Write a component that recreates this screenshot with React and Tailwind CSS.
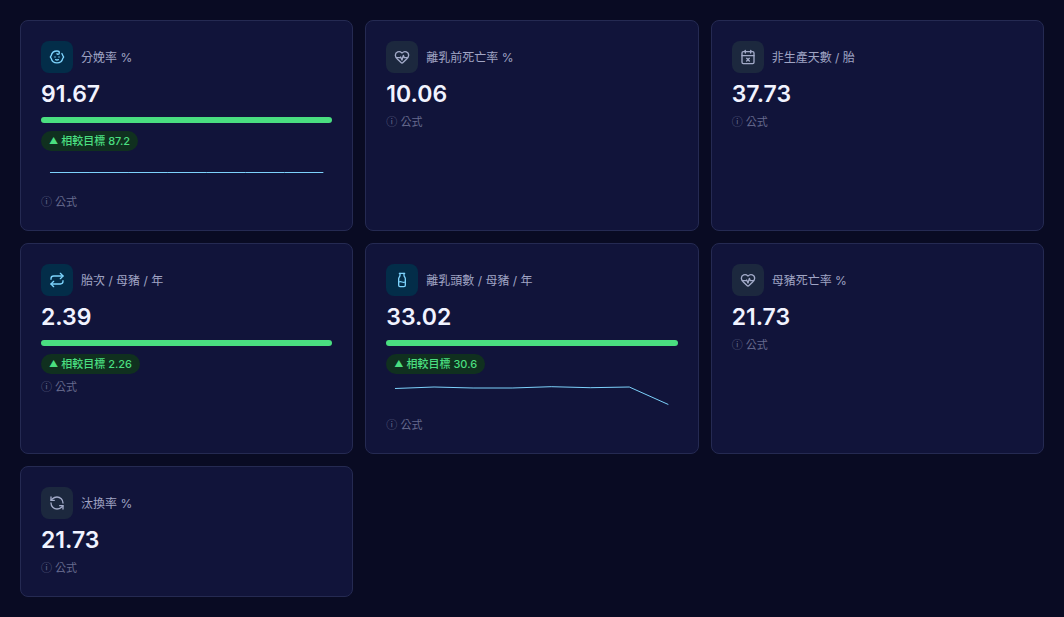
import { Baby, CalendarX, HeartPulse, Milk, RefreshCcw, Repeat } from 'lucide-react'
import clsx from 'clsx'

const metrics = [
  {
    id: 'farrowing-rate',
    label: '分娩率 %',
    value: '91.67',
    icon: Baby,
    target: '87.2',
    trend: [15.5, 15.5, 15.5, 15.5, 15.5, 15.5, 15.5, 15.5],
  },
  { id: 'preweaning-mortality', label: '離乳前死亡率 %', value: '10.06', icon: HeartPulse },
  { id: 'non-productive-days', label: '非生產天數 / 胎', value: '37.73', icon: CalendarX },
  { id: 'litters', label: '胎次 / 母豬 / 年', value: '2.39', icon: Repeat, target: '2.26' },
  {
    id: 'weaned',
    label: '離乳頭數 / 母豬 / 年',
    value: '33.02',
    icon: Milk,
    target: '30.6',
    trend: [8.5, 7, 8, 8, 6.7, 7.7, 7, 24.5],
  },
  { id: 'sow-mortality', label: '母豬死亡率 %', value: '21.73', icon: HeartPulse },
  { id: 'culling-rate', label: '汰換率 %', value: '21.73', icon: RefreshCcw },
]

const Sparkline = ({ data }) => {
  const step = 274 / (data.length - 1)
  const points = data.map((y, i) => `${9 + i * step},${y}`).join(' ')

  return (
    <svg
      className="block w-full h-8"
      viewBox="0 0 292 32"
      preserveAspectRatio="none"
      aria-hidden="true"
    >
      <polyline points={points} fill="none" stroke="#7dd3fc" strokeWidth="1" />
    </svg>
  )
}

const MetricCard = ({ metric }) => {
  const { id, label, value, icon: Icon, target, trend } = metric

  return (
    <section
      aria-labelledby={id}
      className="flex flex-col items-start rounded-lg border border-[#252a52] bg-[#11143a] p-5"
    >
      <div className="flex items-center gap-2">
        <div
          className={clsx(
            'flex h-8 w-8 items-center justify-center rounded-lg',
            target ? 'bg-[#032d49] text-[#7dd3fc]' : 'bg-[#1c283e] text-[#a3abc9]'
          )}
        >
          <Icon size={16} strokeWidth={2} />
        </div>
        <h2 id={id} className="pt-0.5 text-xs text-[#a0a4c4]">{label}</h2>
      </div>

      <div className="mt-1.5 text-[23px] leading-[30px] font-semibold text-[#f1f3ff]">{value}</div>

      {/* Target comparison */}
      {target && (
        <>
          <div className="mt-2 h-1.5 w-full rounded-full bg-[#4ade80]" />
          <div className="mt-2 flex h-5 items-center gap-[3px] rounded-full bg-[#10301f] px-2 text-[11px] font-medium text-[#4ade80]">
            <span className="text-[9px]">▲</span>
            <span>相較目標 {target}</span>
          </div>
        </>
      )}

      {trend && (
        <div className="mt-1.5 w-full">
          <Sparkline data={trend} />
        </div>
      )}

      <button type="button" className="mt-[5px] text-[11px] leading-4 text-[#666a8d]">
        ⓘ 公式
      </button>
    </section>
  )
}

const App = () => {
  return (
    <main className="min-h-screen bg-[#090b23] p-5 font-[Inter,'Noto_Sans_CJK_TC',sans-serif]">
      <div className="grid grid-cols-3 gap-3">
        {metrics.map((metric) => (
          <MetricCard key={metric.id} metric={metric} />
        ))}
      </div>
    </main>
  )
}

export default App
